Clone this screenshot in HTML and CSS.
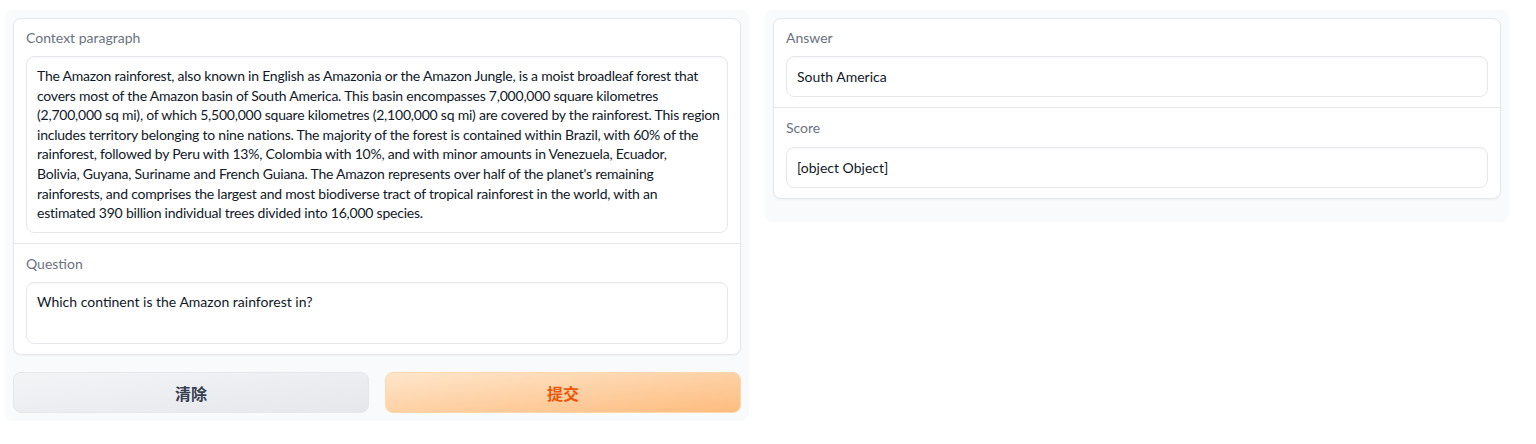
FILE: index.html
```html
<!DOCTYPE html>
<html lang="en">
<head>
<meta charset="utf-8">
<title>Question Answering</title>
<link rel="stylesheet" href="styles.css">
</head>
<body>
<div class="app">
  <div class="column">
    <div class="panel">
      <div class="box">
        <div class="block">
          <div class="label">Context paragraph</div>
          <div class="field field-context">The Amazon rainforest, also known in English as Amazonia or the Amazon Jungle, is a moist broadleaf forest that<br>covers most of the Amazon basin of South America. This basin encompasses 7,000,000 square kilometres<br>(2,700,000 sq mi), of which 5,500,000 square kilometres (2,100,000 sq mi) are covered by the rainforest. This region<br>includes territory belonging to nine nations. The majority of the forest is contained within Brazil, with 60% of the<br>rainforest, followed by Peru with 13%, Colombia with 10%, and with minor amounts in Venezuela, Ecuador,<br>Bolivia, Guyana, Suriname and French Guiana. The Amazon represents over half of the planet's remaining<br>rainforests, and comprises the largest and most biodiverse tract of tropical rainforest in the world, with an<br>estimated 390 billion individual trees divided into 16,000 species.</div>
        </div>
        <div class="block">
          <div class="label">Question</div>
          <div class="field field-question">Which continent is the Amazon rainforest in?</div>
        </div>
      </div>
      <div class="buttons">
        <button class="btn btn-secondary">清除</button>
        <button class="btn btn-primary">提交</button>
      </div>
    </div>
  </div>
  <div class="column">
    <div class="panel panel-output">
      <div class="box">
        <div class="block">
          <div class="label">Answer</div>
          <div class="field field-single">South America</div>
        </div>
        <div class="block">
          <div class="label">Score</div>
          <div class="field field-single">[object Object]</div>
        </div>
      </div>
    </div>
  </div>
</div>
</body>
</html>
```

FILE: styles.css
```css
* { box-sizing: border-box; }
html, body { margin: 0; padding: 0; background: #ffffff; }
body {
  font-family: "Lato", "Noto Sans", "Liberation Sans", sans-serif;
  color: #1f2937;
}
.app {
  display: flex;
  gap: 16px;
  width: 1504px;
  margin-left: 5px;
  padding-top: 10px;
  align-items: flex-start;
}
.column { flex: 1 1 0; min-width: 0; }
.panel {
  background: #f9fafb;
  border-radius: 8px;
  padding: 8px;
  display: flex;
  flex-direction: column;
  gap: 17px;
}
.panel-output { padding-bottom: 23px; }
.box {
  background: #ffffff;
  border: 1px solid #e5e7eb;
  border-radius: 8px;
  box-shadow: 0 1px 2px rgba(0,0,0,0.04);
  overflow: hidden;
}
.block {
  padding: 9px 12px 10px;
  display: flex;
  flex-direction: column;
  gap: 8px;
}
.block + .block {
  border-top: 1px solid #e5e7eb;
  padding-top: 10px;
  gap: 8.5px;
}
.label {
  font-size: 14px;
  line-height: 20px;
  color: #6b7280;
}
.field {
  border: 1px solid #e5e7eb;
  border-radius: 8px;
  background: #ffffff;
  box-shadow: inset 0 1px 2px rgba(0,0,0,0.03);
  padding: 9px 10px;
  font-size: 14px;
  line-height: 19.6px;
  color: #111827;
  white-space: nowrap;
}
.field-context { min-height: 176px; letter-spacing: -0.22px; }
.field-question { height: 62px; }
.field-single { height: 41px; line-height: 21px; }
.buttons {
  display: flex;
  gap: 16px;
}
.btn {
  flex: 1 1 0;
  height: 41px;
  border-radius: 8px;
  font-family: "Noto Sans CJK SC", "Noto Sans", sans-serif;
  font-size: 16px;
  font-weight: 700;
  cursor: pointer;
}
.btn-secondary {
  background: linear-gradient(to bottom right, #f3f4f6, #e5e7eb);
  border: 1px solid #e5e7eb;
  color: #374151;
}
.btn-primary {
  background: linear-gradient(to bottom right, #fee6cc, #fdbc7e);
  border: 1px solid #fed7aa;
  color: #ea580c;
}
```
